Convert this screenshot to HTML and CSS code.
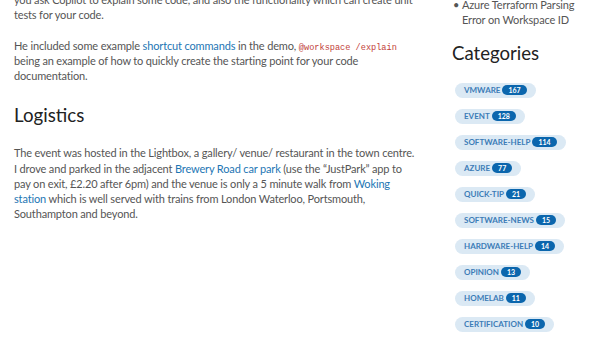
FILE: index.html
```html
<!DOCTYPE html>
<html lang="en">
<head>
    <meta charset="UTF-8">
    <meta name="viewport" content="width=device-width, initial-scale=1.0">
    <title>Logistics</title>
    <link rel="stylesheet" href="styles.css">
</head>
<body>
    <div class="page">
        <main class="post">
            <p>you ask Copilot to explain some code, and also the functionality which can create unit<br>tests for your code.</p>
            <p>He included some example <a href="#">shortcut commands</a> in the demo, <code>@workspace /explain</code><br>being an example of how to quickly create the starting point for your code<br>documentation.</p>
            <h2>Logistics</h2>
            <p>The event was hosted in the Lightbox, a gallery/ venue/ restaurant in the town centre.<br>I drove and parked in the adjacent <a href="#">Brewery Road car park</a> (use the “JustPark” app to<br>pay on exit, £2.20 after 6pm) and the venue is only a 5 minute walk from <a href="#">Woking<br>station</a> which is well served with trains from London Waterloo, Portsmouth,<br>Southampton and beyond.</p>
        </main>
        <aside class="sidebar">
            <ul class="recent">
                <li>Azure Terraform Parsing<br>Error on Workspace ID</li>
            </ul>
            <h3>Categories</h3>
            <div class="tags">
                <a class="tag" href="#">VMWARE <span class="count">167</span></a>
                <a class="tag" href="#">EVENT <span class="count">128</span></a>
                <a class="tag" href="#">SOFTWARE-HELP <span class="count">114</span></a>
                <a class="tag" href="#">AZURE <span class="count">77</span></a>
                <a class="tag" href="#">QUICK-TIP <span class="count">21</span></a>
                <a class="tag" href="#">SOFTWARE-NEWS <span class="count">15</span></a>
                <a class="tag" href="#">HARDWARE-HELP <span class="count">14</span></a>
                <a class="tag" href="#">OPINION <span class="count">13</span></a>
                <a class="tag" href="#">HOMELAB <span class="count">11</span></a>
                <a class="tag" href="#">CERTIFICATION <span class="count">10</span></a>
            </div>
        </aside>
    </div>
</body>
</html>
```
FILE: styles.css
```css
* { margin: 0; padding: 0; box-sizing: border-box; }
body {
    font-family: Lato, "Open Sans", sans-serif;
    background: #fff;
    color: #555;
    overflow: hidden;
}
.page { display: flex; height: 338px; overflow: hidden; }
.post {
    width: 440px;
    flex: none;
    padding: 0 0 0 14px;
    margin-top: -8px;
    font-size: 11px;
    letter-spacing: -0.15px;
    line-height: 15.25px;
}
.post p { margin-bottom: 15px; }
.post a { color: #1d76b4; text-decoration: none; }
.post code {
    font-family: "Liberation Mono", monospace;
    font-size: 8.6px;
    letter-spacing: 0;
    line-height: 1;
    color: #c2423a;
}
.post h2 {
    font-weight: 400;
    font-size: 18.7px;
    letter-spacing: 0;
    color: #222;
    line-height: 24px;
    margin: 20px 0 18px;
}
.sidebar { flex: 1; padding-left: 12px; margin-top: -3px; }
.recent { list-style: none; font-size: 11px; letter-spacing: -0.15px; line-height: 15.25px; }
.recent li { padding-left: 10px; position: relative; }
.recent li::before { content: '•'; position: absolute; left: 1px; }
.sidebar h3 {
    font-weight: 400;
    font-size: 18.6px;
    color: #222;
    line-height: 24px;
    margin: 13px 0 18px;
}
.tags { display: flex; flex-direction: column; align-items: flex-start; gap: 11px; padding-left: 3px; }
.tag {
    display: flex;
    align-items: center;
    gap: 2px;
    height: 15px;
    padding: 0 9px 0 9px;
    border-radius: 8px;
    background: #dbe9f4;
    color: #3b7cb7;
    font-size: 8px;
    font-weight: 700;
    text-decoration: none;
}
.count {
    background: #0b66ad;
    color: #fff;
    border-radius: 6px;
    padding: 0 6px;
    font-size: 7px;
    line-height: 10px;
}
```
